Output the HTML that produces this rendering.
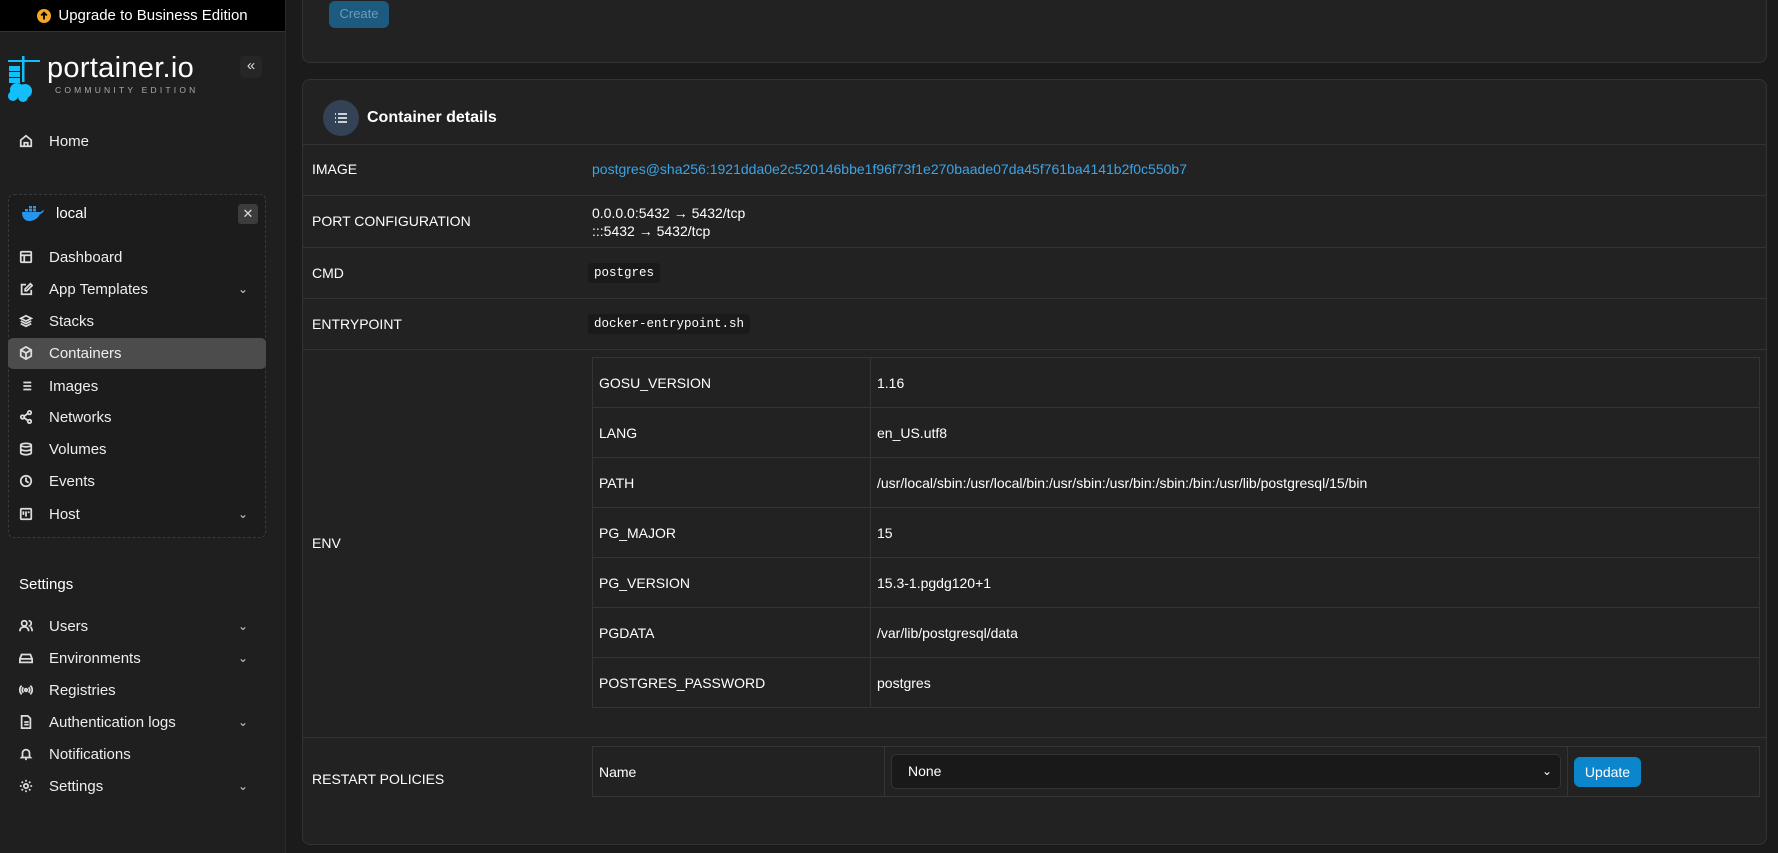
<!DOCTYPE html>
<html><head><meta charset="utf-8"><style>
*{box-sizing:border-box;margin:0;padding:0}
body{width:1778px;height:853px;overflow:hidden;background:#1b1b1b;font-family:"Liberation Sans",sans-serif;color:#fff;font-size:14px;position:relative}
.sb{position:absolute;left:0;top:0;width:286px;height:853px;background:#1f1f1f;border-right:1px solid #2a2a2a}
.up{height:32px;background:#000;display:flex;align-items:center;justify-content:center;font-size:15px;gap:7px;border-bottom:1px solid #333}
.up i{width:14px;height:14px;border-radius:50%;background:#f5a623;display:inline-block;position:relative}
.it{position:absolute;left:0;width:286px;height:32px;display:flex;align-items:center;font-size:15px;color:#eee}
.it svg{position:absolute;left:19px;width:14px;height:14px;fill:none;stroke:#ddd;stroke-width:2}
.it span{position:absolute;left:49px}
.it b{position:absolute;right:38px;font-weight:normal;color:#ccc;font-size:12px}
.box{position:absolute;left:8px;top:194px;width:258px;height:344px;border:1px dashed #3a3a3a;border-radius:6px;background:#1c1c1c}
.card{position:absolute;left:302px;width:1465px;background:#222;border:1px solid #333;border-radius:8px}
.row{position:absolute;left:0;width:1463px;border-top:1px solid #333}
.lbl{position:absolute;left:9px;font-size:14px}
.val{position:absolute;left:289px;font-size:14px}
code{font-family:"Liberation Mono",monospace;font-size:12.5px;background:#1a1a1a;padding:3px 6px;border-radius:3px}
table{border-collapse:collapse;position:absolute}
td{border:1px solid #353535;padding:0 6px;height:50px;font-size:14px}
</style></head><body>
<div class="sb">
 <div class="up"><i><svg width="14" height="14" viewBox="0 0 14 14" style="position:absolute;left:0;top:0"><path d="M7 10.5V3.8M4.2 6.5L7 3.7l2.8 2.8" stroke="#000" stroke-width="1.8" fill="none"/></svg></i>Upgrade to Business Edition</div>
 <svg style="position:absolute;left:7px;top:54px" width="36" height="48" viewBox="0 0 36 48"><g fill="#13bef9"><rect x="15" y="2" width="2.5" height="26"/><rect x="1" y="6" width="32" height="2"/><rect x="2" y="12" width="11" height="5"/><rect x="2" y="18" width="11" height="5"/><rect x="2" y="24" width="11" height="5"/><circle cx="10" cy="36" r="7"/><circle cx="18" cy="37" r="7"/><circle cx="6" cy="42" r="5"/><circle cx="16" cy="43" r="5"/></g></svg>
 <div style="position:absolute;left:47px;top:52px;font-size:29px;letter-spacing:.3px">portainer.io</div>
 <div style="position:absolute;left:55px;top:85px;font-size:8.5px;letter-spacing:3.2px;color:#aaa">COMMUNITY EDITION</div>
 <div style="position:absolute;left:240px;top:56px;width:22px;height:22px;background:#262626;border-radius:4px;color:#ddd;text-align:center;line-height:20px;font-size:15px">«</div>
 <div class="it" style="top:125px"><svg viewBox="0 0 16 16"><path d="M2 7l6-5 6 5v7H2z M6 14v-4h4v4"/></svg><span>Home</span></div>
 <div class="box"></div>
 <svg style="position:absolute;left:21px;top:205px" width="24" height="16" viewBox="0 0 24 16"><path fill="#2496ed" d="M1 7h19c1-2 3-2 3-2-1 3-3 4-4 4-2 5-7 7-11 7S1 13 1 7z"/><g fill="#2496ed"><rect x="4" y="4" width="3" height="2.5"/><rect x="8" y="4" width="3" height="2.5"/><rect x="12" y="4" width="3" height="2.5"/><rect x="8" y="1" width="3" height="2.5"/><rect x="12" y="1" width="3" height="2.5"/></g></svg>
 <div style="position:absolute;left:56px;top:205px;font-size:15px">local</div>
 <div style="position:absolute;left:238px;top:204px;width:20px;height:20px;background:#3c3c3c;border-radius:3px;text-align:center;line-height:19px;font-size:13px;color:#ddd">✕</div>
 <div style="position:absolute;left:8px;top:338px;width:258px;height:31px;background:#4c4c4c;border-radius:5px"></div>
 <div class="it" style="top:241px"><svg viewBox="0 0 16 16"><rect x="2" y="2" width="12" height="12" rx="1"/><path d="M2 6h12M6 6v8"/></svg><span>Dashboard</span></div>
 <div class="it" style="top:273px"><svg viewBox="0 0 16 16"><path d="M8 3H3v11h11V9M13 2l2 2-6 6H7V8z"/></svg><span>App Templates</span><b>⌄</b></div>
 <div class="it" style="top:305px"><svg viewBox="0 0 16 16"><path d="M8 2l6 3-6 3-6-3zM2 8l6 3 6-3M2 11l6 3 6-3"/></svg><span>Stacks</span></div>
 <div class="it" style="top:337px"><svg viewBox="0 0 16 16"><path d="M8 1l6 3.5v7L8 15l-6-3.5v-7zM2 4.5L8 8l6-3.5M8 8v7"/></svg><span>Containers</span></div>
 <div class="it" style="top:370px"><svg viewBox="0 0 16 16"><path d="M5 4h9M5 8h9M5 12h9M2 4h0M2 8h0M2 12h0"/></svg><span>Images</span></div>
 <div class="it" style="top:401px"><svg viewBox="0 0 16 16"><circle cx="12" cy="3" r="2"/><circle cx="4" cy="8" r="2"/><circle cx="12" cy="13" r="2"/><path d="M6 7l4-3M6 9l4 3"/></svg><span>Networks</span></div>
 <div class="it" style="top:433px"><svg viewBox="0 0 16 16"><ellipse cx="8" cy="3.5" rx="6" ry="2"/><path d="M2 3.5v9c0 1 3 2 6 2s6-1 6-2v-9M2 8c0 1 3 2 6 2s6-1 6-2"/></svg><span>Volumes</span></div>
 <div class="it" style="top:465px"><svg viewBox="0 0 16 16"><circle cx="8" cy="8" r="6"/><path d="M8 4v4l3 2"/></svg><span>Events</span></div>
 <div class="it" style="top:498px"><svg viewBox="0 0 16 16"><rect x="2" y="2" width="12" height="12" rx="1"/><path d="M5 5v4M8 5v6M11 5v2"/></svg><span>Host</span><b>⌄</b></div>
 <div style="position:absolute;left:19px;top:576px;font-size:15px">Settings</div>
 <div class="it" style="top:610px"><svg viewBox="0 0 16 16"><circle cx="6" cy="5" r="3"/><path d="M1 14c0-3 2-5 5-5s5 2 5 5M11 2a3 3 0 010 6M13 9c1.5 1 2 3 2 5"/></svg><span>Users</span><b>⌄</b></div>
 <div class="it" style="top:642px"><svg viewBox="0 0 16 16"><path d="M1 9l2-5h10l2 5v4H1zM1 9h14"/></svg><span>Environments</span><b>⌄</b></div>
 <div class="it" style="top:674px"><svg viewBox="0 0 16 16"><circle cx="8" cy="8" r="1.5"/><path d="M5 5a4 4 0 000 6M11 5a4 4 0 010 6M3 3a7 7 0 000 10M13 3a7 7 0 010 10"/></svg><span>Registries</span></div>
 <div class="it" style="top:706px"><svg viewBox="0 0 16 16"><path d="M3 1h7l3 3v11H3zM6 8h5M6 11h5"/></svg><span>Authentication logs</span><b>⌄</b></div>
 <div class="it" style="top:738px"><svg viewBox="0 0 16 16"><path d="M4 11V7a4 4 0 018 0v4l1 1H3zM7 14h2"/></svg><span>Notifications</span></div>
 <div class="it" style="top:770px"><svg viewBox="0 0 16 16"><circle cx="8" cy="8" r="2.5"/><path d="M8 1v2M8 13v2M1 8h2M13 8h2M3 3l1.5 1.5M11.5 11.5L13 13M3 13l1.5-1.5M11.5 4.5L13 3"/></svg><span>Settings</span><b>⌄</b></div>
</div>

<div class="card" style="top:-10px;height:73px"><div style="position:absolute;left:26px;top:10px;width:60px;height:27px;background:#1c5a80;border-radius:6px;color:#6f9bb6;font-size:13px;text-align:center;line-height:26px">Create</div></div>

<div class="card" style="top:79px;height:766px">
 <div style="position:absolute;left:20px;top:20px;width:36px;height:36px;border-radius:50%;background:#344255"></div>
 <svg style="position:absolute;left:31px;top:31px" width="14" height="14" viewBox="0 0 14 14" fill="none" stroke="#fff" stroke-width="1.4"><path d="M4 3h9M4 7h9M4 11h9M1 3h1M1 7h1M1 11h1"/></svg>
 <div style="position:absolute;left:64px;top:29px;font-size:16px;font-weight:bold">Container details</div>
 <div class="row" style="top:64px;height:51px"><span class="lbl" style="top:16px">IMAGE</span><span class="val" style="top:16px;color:#3ca4e6">postgres@sha256:1921dda0e2c520146bbe1f96f73f1e270baade07da45f761ba4141b2f0c550b7</span></div>
 <div class="row" style="top:115px;height:52px"><span class="lbl" style="top:17px">PORT CONFIGURATION</span><span class="val" style="top:8px;line-height:18px">0.0.0.0:5432 → 5432/tcp<br>:::5432 → 5432/tcp</span></div>
 <div class="row" style="top:167px;height:51px"><span class="lbl" style="top:17px">CMD</span><span class="val" style="top:15px;left:285px"><code>postgres</code></span></div>
 <div class="row" style="top:218px;height:51px"><span class="lbl" style="top:17px">ENTRYPOINT</span><span class="val" style="top:15px;left:285px"><code>docker-entrypoint.sh</code></span></div>
 <div class="row" style="top:269px;height:388px"><span class="lbl" style="top:185px">ENV</span>
  <table style="left:289px;top:7px;width:1168px">
   <tr><td style="width:278px">GOSU_VERSION</td><td>1.16</td></tr>
   <tr><td>LANG</td><td>en_US.utf8</td></tr>
   <tr><td>PATH</td><td>/usr/local/sbin:/usr/local/bin:/usr/sbin:/usr/bin:/sbin:/bin:/usr/lib/postgresql/15/bin</td></tr>
   <tr><td>PG_MAJOR</td><td>15</td></tr>
   <tr><td>PG_VERSION</td><td>15.3-1.pgdg120+1</td></tr>
   <tr><td>PGDATA</td><td>/var/lib/postgresql/data</td></tr>
   <tr><td>POSTGRES_PASSWORD</td><td>postgres</td></tr>
  </table>
 </div>
 <div class="row" style="top:657px;height:100px"><span class="lbl" style="top:33px">RESTART POLICIES</span>
  <table style="left:289px;top:8px;width:1168px">
   <tr><td style="width:292px">Name</td><td style="width:683px;padding:0 6px"><div style="height:35px;background:#191919;border:1px solid #333;border-radius:5px;position:relative;padding-left:16px;line-height:33px">None<span style="position:absolute;right:8px;top:0;font-size:12px">⌄</span></div></td><td><div style="width:67px;height:30px;background:#0b86cc;border-radius:6px;text-align:center;line-height:30px">Update</div></td></tr>
  </table>
 </div>
</div>
</body></html>
